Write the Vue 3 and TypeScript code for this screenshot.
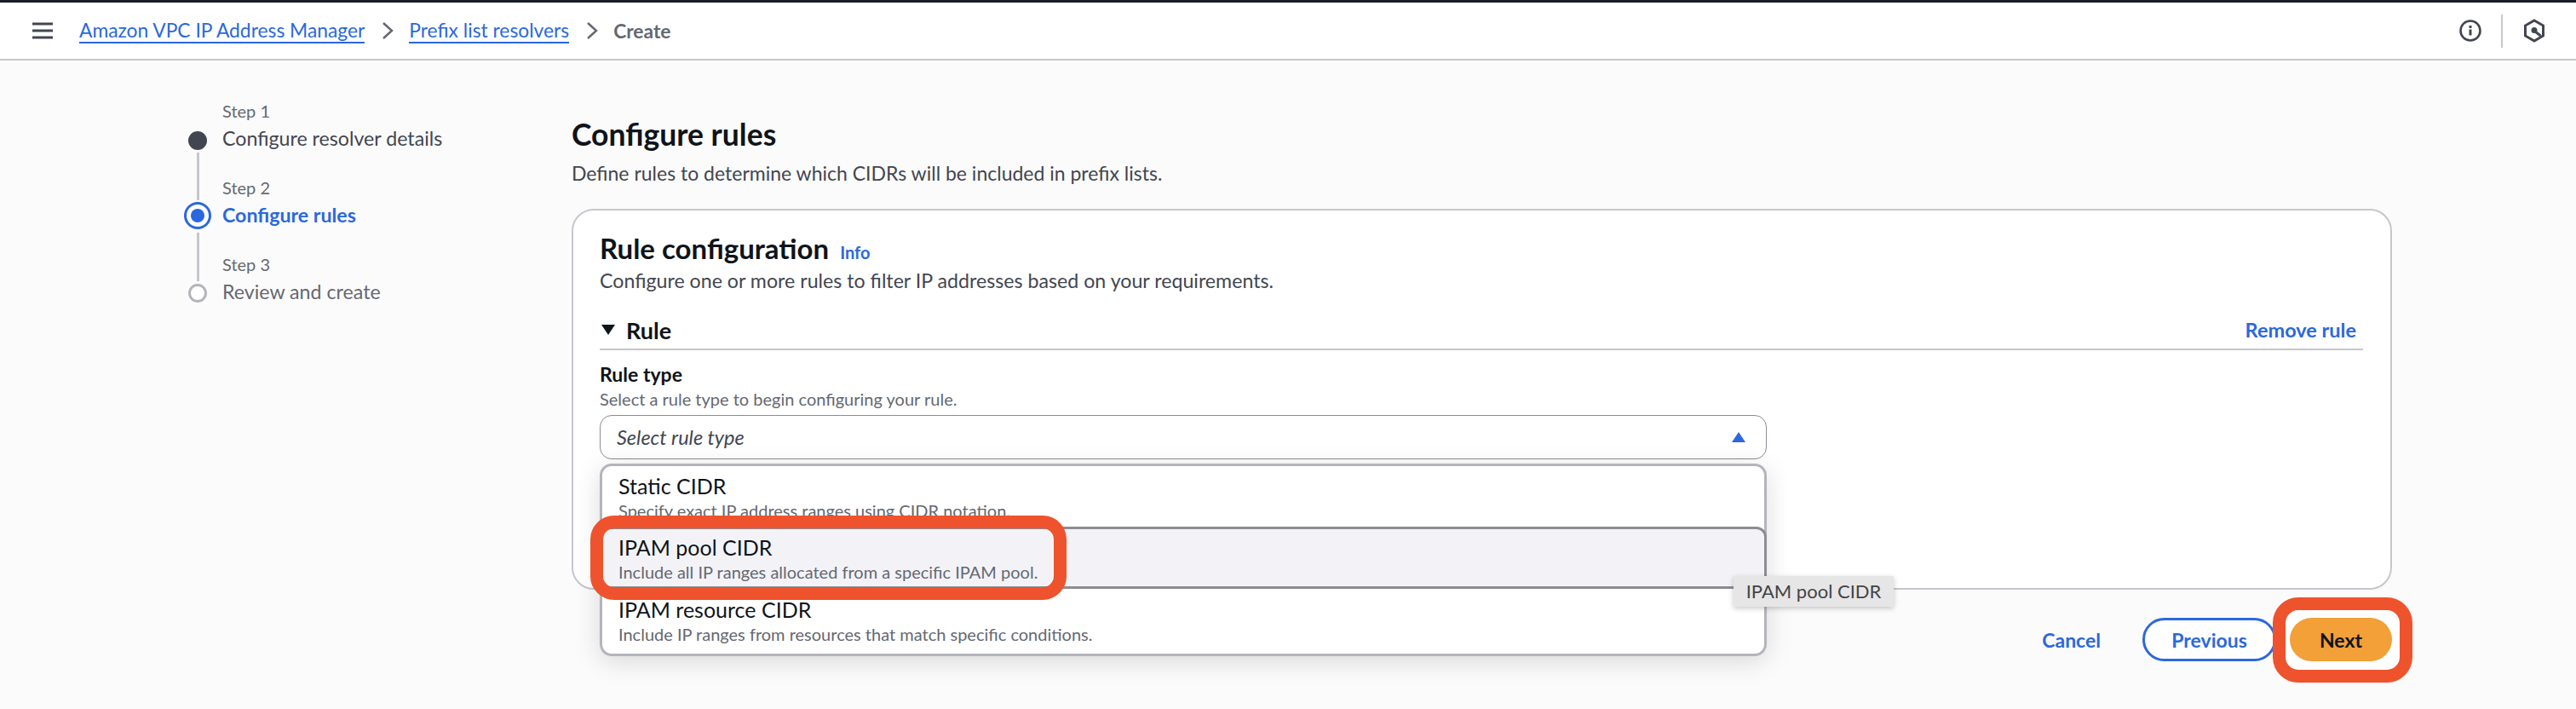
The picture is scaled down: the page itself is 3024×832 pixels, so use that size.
<script setup lang="ts">
interface Option { title: string; desc: string; active?: boolean }
const options: Option[] = [
  { title: 'Static CIDR', desc: 'Specify exact IP address ranges using CIDR notation.' },
  { title: 'IPAM pool CIDR', desc: 'Include all IP ranges allocated from a specific IPAM pool.', active: true },
  { title: 'IPAM resource CIDR', desc: 'Include IP ranges from resources that match specific conditions.' },
]
</script>

<template>
  <div class="page">
    <div class="stripe"></div>
    <header class="topbar">
      <svg class="burger" width="24" height="20" viewBox="0 0 24 20"><path d="M0 2h24M0 10h24M0 18h24" stroke="#424650" stroke-width="3" fill="none" /></svg>
      <a class="crumb first">Amazon VPC IP Address Manager</a>
      <svg class="chev" width="14" height="20" viewBox="0 0 14 20"><path d="M2 1l10 9-10 9" stroke="#656871" stroke-width="2.5" fill="none" /></svg>
      <a class="crumb">Prefix list resolvers</a>
      <svg class="chev" width="14" height="20" viewBox="0 0 14 20"><path d="M2 1l10 9-10 9" stroke="#656871" stroke-width="2.5" fill="none" /></svg>
      <span class="current">Create</span>
      <div class="tools">
        <svg width="26" height="26" viewBox="0 0 26 26"><circle cx="13" cy="13" r="11.5" stroke="#424650" stroke-width="2.6" fill="none" /><path d="M13 11.5v7" stroke="#424650" stroke-width="3" /><path d="M13 7v3" stroke="#424650" stroke-width="3" /></svg>
        <span class="tool-sep"></span>
        <svg width="26" height="28" viewBox="0 0 26 28"><path d="M13 2l10.5 6v12L13 26 2.500 20V8z" stroke="#424650" stroke-width="3" fill="none" /><circle cx="13" cy="13.500" r="3.500" fill="#424650" /><path d="M14 15l6.500 5" stroke="#424650" stroke-width="3" /></svg>
      </div>
    </header>

    <div class="body">
      <nav class="steps">
        <span class="s-label r1">Step 1</span>
        <span class="dot dark r2"></span>
        <span class="s-name r2">Configure resolver details</span>
        <span class="conn c1"></span>
        <span class="s-label r4">Step 2</span>
        <span class="dot radio r5"></span>
        <span class="s-name active r5">Configure rules</span>
        <span class="conn c2"></span>
        <span class="s-label r7">Step 3</span>
        <span class="dot hollow r8"></span>
        <span class="s-name muted r8">Review and create</span>
      </nav>

      <main class="main">
        <h1 class="title">Configure rules</h1>
        <p class="sub">Define rules to determine which CIDRs will be included in prefix lists.</p>

        <section class="card">
          <div class="card-head">
            <h2>Rule configuration</h2>
            <a class="info">Info</a>
          </div>
          <p class="card-sub">Configure one or more rules to filter IP addresses based on your requirements.</p>

          <div class="rule-head">
            <svg width="16" height="12" viewBox="0 0 16 12"><path d="M0 0h16L8 12z" fill="#0f141a" /></svg>
            <span class="rule-title">Rule</span>
            <a class="remove">Remove rule</a>
          </div>

          <label class="field-label">Rule type</label>
          <p class="help">Select a rule type to begin configuring your rule.</p>

          <div class="select-wrap">
            <div class="select">
              <span class="placeholder">Select rule type</span>
              <svg width="16" height="12" viewBox="0 0 16 12"><path d="M8 0l8 12H0z" fill="#2b68dd" /></svg>
            </div>
            <div class="dropdown">
              <div v-for="o in options" :key="o.title" class="option" :class="{ active: o.active }">
                <div class="o-title">{{ o.title }}</div>
                <div class="o-desc">{{ o.desc }}</div>
                <span v-if="o.active" class="mark-option"></span>
                <span v-if="o.active" class="tooltip">IPAM pool CIDR</span>
              </div>
            </div>
          </div>
        </section>

        <footer class="actions">
          <a class="cancel">Cancel</a>
          <button class="btn prev">Previous</button>
          <div class="next-wrap">
            <span class="mark-next"></span>
            <button class="btn next">Next</button>
          </div>
        </footer>
      </main>
    </div>
  </div>
</template>

<style>
html, body { margin: 0; background: #fbfbfb; }
</style>

<style scoped>
.page { width: 3024px; height: 832px; overflow: hidden; background: #fbfbfb; font-family: "Lato", "Open Sans", sans-serif; color: #0f141a; }
.stripe { height: 3px; background: #161d26; }
.topbar { height: 68px; box-sizing: border-box; background: #fff; border-bottom: 2px solid #c6c6cd; display: flex; align-items: center; padding-left: 38px; font-size: 22.800px; }
.burger { margin-right: 31px; }
.crumb { color: #2b68dd; border-bottom: 2px solid #2b68dd; line-height: 28px; }
.chev { margin: 0 18px 0 20px; }
.current { color: #656871; font-weight: 700; }
.tools { margin-left: auto; margin-right: 36px; display: flex; align-items: center; }
.tool-sep { width: 2px; height: 39px; background: #c6c6cd; margin: 0 24px 0 23px; }

.body { display: flex; }
.steps { width: 459px; margin-left: 212px; margin-top: 44px; display: grid; grid-template-columns: 40px 1fr; grid-template-rows: 32px 32px 26px 32px 32px 26px 32px 32px; column-gap: 9px; align-self: flex-start; }
.s-label { grid-column: 2; font-size: 20px; color: #656871; line-height: 32px; margin-top: -1px; }
.s-name { grid-column: 2; font-size: 23.200px; color: #424650; line-height: 32px; margin-top: -1px; }
.s-name.active { color: #2b68dd; font-weight: 700; }
.s-name.muted { color: #656871; }
.r1 { grid-row: 1; } .r2 { grid-row: 2; } .r4 { grid-row: 4; } .r5 { grid-row: 5; } .r7 { grid-row: 7; } .r8 { grid-row: 8; }
.dot { grid-column: 1; justify-self: center; align-self: center; box-sizing: border-box; border-radius: 50%; margin-top: 0; }
.dot.dark { width: 22px; height: 22px; background: #424650; margin-top: 4px; }
.dot.radio { width: 32px; height: 32px; border: 3px solid #2b68dd; background: #fff; position: relative; }
.dot.radio::after { content: ""; position: absolute; inset: 5px; border-radius: 50%; background: #2b68dd; }
.dot.hollow { width: 22px; height: 22px; border: 3px solid #b4b4bb; background: #fff; margin-top: 2px; }
.conn { grid-column: 1; justify-self: center; width: 3px; background: #c6c6cd; }
.c1 { grid-row: 3 / span 2; margin-bottom: 2px; }
.c2 { grid-row: 6 / span 2; margin-top: 4px; margin-bottom: -3px; }

.main { width: 2137px; padding-top: 65px; display: flex; flex-direction: column; }
.title { margin: 0; font-size: 35.500px; line-height: 44px; font-weight: 700; }
.sub { margin: 8px 0 27px; font-size: 23px; line-height: 30px; color: #424650; }
.card { height: 447px; box-sizing: border-box; background: #fff; border: 2px solid #c6c6cd; border-radius: 26px; padding: 24px 32px 0 31px; }
.card-head { display: flex; align-items: baseline; height: 40px; line-height: 40px; }
.card-head h2 { margin: 0; font-size: 33px; font-weight: 700; }
.info { margin-left: 13px; color: #2b68dd; font-size: 20px; font-weight: 700; }
.card-sub { margin: 4px 0 0; font-size: 23.200px; line-height: 28px; color: #424650; }
.rule-head { margin-top: 24px; height: 40px; padding-bottom: 2px; display: flex; align-items: center; border-bottom: 2px solid #c6c6cd; padding-left: 2px; padding-right: 8px; }
.rule-title { margin-left: 13px; font-size: 27px; font-weight: 700; }
.remove { margin-left: auto; color: #2b68dd; font-size: 23.500px; font-weight: 700; }
.field-label { display: block; margin-top: 14px; font-size: 23px; line-height: 28px; font-weight: 700; }
.help { margin: 3px 0 0; font-size: 20px; line-height: 24px; color: #656871; }
.select-wrap { position: relative; margin-top: 7px; width: 1370px; }
.select { height: 52px; box-sizing: border-box; border: 1.500px solid #8c8c94; border-radius: 14px; background: #fff; display: flex; align-items: center; justify-content: space-between; padding: 0 24px 0 19px; }
.placeholder { font-style: italic; font-size: 23.500px; color: #424650; }

.dropdown { position: absolute; z-index: 2; top: 57px; left: 0; right: 0; height: 226px; box-sizing: border-box; background: #fff; border: 3px solid #b4b4bb; border-radius: 14px; box-shadow: 0 6px 30px rgba(0, 0, 0, .14); display: flex; flex-direction: column; }
.option { position: relative; height: 71px; box-sizing: border-box; padding: 7px 19px 0; }
.option.active { height: 73px; flex: none; background: #f3f3f7; border: 3px solid #8c8c94; margin: 0 -3px; padding: 5px 19px 0; border-radius: 12px; }
.option:last-child { height: 76px; padding-top: 8px; }
.o-title { font-size: 25px; line-height: 32px; color: #0f141a; }
.o-desc { font-size: 20px; line-height: 26px; color: #656871; }
.mark-option { position: absolute; left: -14px; top: -16px; width: 559px; height: 99px; box-sizing: border-box; border: 15px solid #ee532d; border-radius: 28px; }
.tooltip { position: absolute; z-index: 3; left: 1328px; top: 55px; width: 188px; height: 36px; box-sizing: border-box; background: #e6e6e6; color: #444; font-size: 22px; line-height: 36px; text-align: center; box-shadow: 0 2px 6px rgba(0, 0, 0, .22); }

.actions { margin-top: 33px; display: flex; align-items: center; justify-content: flex-end; font-size: 23px; font-weight: 700; }
.cancel { color: #2b68dd; margin-right: 49px; }
.btn { height: 51px; box-sizing: border-box; border-radius: 26px; font: inherit; cursor: pointer; }
.prev { width: 157px; background: #fff; color: #2b68dd; border: 3px solid #2b68dd; margin-right: 16px; }
.next-wrap { position: relative; }
.next { position: relative; display: block; width: 120px; background: #f2a037; color: #0f141a; border: none; }
.mark-next { position: absolute; left: -20px; top: -24px; right: -24px; bottom: -25px; background: #fff; border: 15px solid #ee532d; border-radius: 30px; }
</style>
